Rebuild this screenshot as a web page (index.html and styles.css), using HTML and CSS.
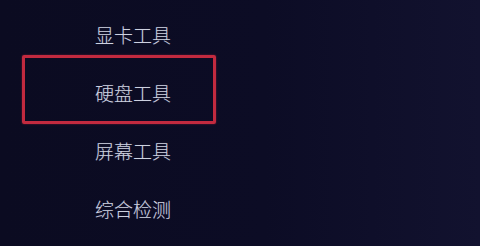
FILE: index.html
```html
<!DOCTYPE html>
<html lang="zh-CN">
<head>
    <meta charset="UTF-8">
    <meta name="viewport" content="width=device-width, initial-scale=1.0">
    <title>工具菜单</title>
    <link rel="stylesheet" href="styles.css">
</head>
<body>
    <ul class="menu">
        <li class="menu-item">显卡工具</li>
        <li class="menu-item active">硬盘工具</li>
        <li class="menu-item">屏幕工具</li>
        <li class="menu-item">综合检测</li>
    </ul>
</body>
</html>
```

FILE: styles.css
```css
html, body {
    height: 100%;
}

body {
    margin: 0;
    padding: 0;
    background: linear-gradient(90deg, #0b0b21 0%, #0c0c25 55%, #12122f 100%);
    font-family: "Noto Sans CJK SC", "Noto Sans", sans-serif;
    overflow: hidden;
}

.menu {
    list-style: none;
    margin: 0;
    padding: 6px 0 0 22px;
}

.menu-item {
    position: relative;
    width: 194px;
    height: 58px;
    line-height: 58px;
    padding-left: 73px;
    box-sizing: border-box;
    font-size: 19px;
    font-weight: 300;
    color: #cdd1e0;
    text-shadow: 0 0 1px rgba(190, 195, 220, 0.3);
}

.menu-item.active::after {
    content: "";
    position: absolute;
    top: -9px;
    bottom: -2px;
    left: 0;
    right: 0;
    border: 3px solid #c22a3f;
    border-radius: 2px;
    box-shadow: 0 0 2px rgba(194, 42, 63, 0.6);
}
```
